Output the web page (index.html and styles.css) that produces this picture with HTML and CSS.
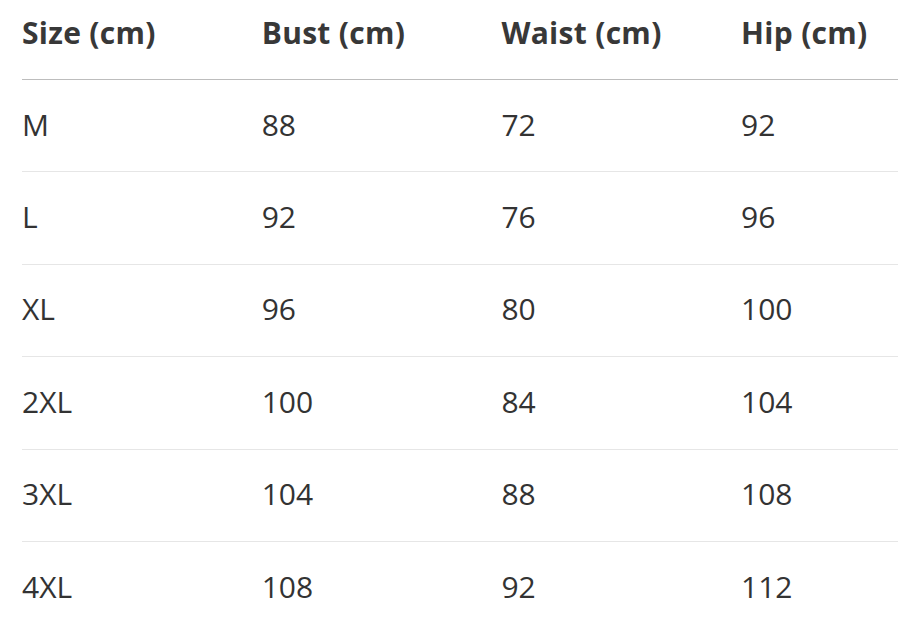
FILE: index.html
```html
<!DOCTYPE html>
<html>
<head>
<meta charset="utf-8">
<link rel="stylesheet" href="styles.css">
</head>
<body>
<div class="table">
  <div class="row head">
    <div class="cell">Size (cm)</div>
    <div class="cell">Bust (cm)</div>
    <div class="cell">Waist (cm)</div>
    <div class="cell">Hip (cm)</div>
  </div>
  <div class="row first">
    <div class="cell">M</div><div class="cell">88</div><div class="cell">72</div><div class="cell">92</div>
  </div>
  <div class="row">
    <div class="cell">L</div><div class="cell">92</div><div class="cell">76</div><div class="cell">96</div>
  </div>
  <div class="row">
    <div class="cell">XL</div><div class="cell">96</div><div class="cell">80</div><div class="cell">100</div>
  </div>
  <div class="row">
    <div class="cell">2XL</div><div class="cell">100</div><div class="cell">84</div><div class="cell">104</div>
  </div>
  <div class="row">
    <div class="cell">3XL</div><div class="cell">104</div><div class="cell">88</div><div class="cell">108</div>
  </div>
  <div class="row">
    <div class="cell">4XL</div><div class="cell">108</div><div class="cell">92</div><div class="cell">112</div>
  </div>
</div>
</body>
</html>
```

FILE: styles.css
```css
html, body {
  margin: 0;
  padding: 0;
  background: #ffffff;
  overflow: hidden;
}
body {
  font-family: "Open Sans", "Noto Sans", "Liberation Sans", sans-serif;
  color: #333333;
}
.table {
  margin-left: 22px;
  display: flex;
  flex-direction: column;
}
.row {
  display: grid;
  grid-template-columns: 239.7px 239.7px 239.7px 1fr;
  box-sizing: border-box;
  height: 92.4px;
  padding-bottom: 3px;
  border-top: 1px solid #e6e6e6;
  align-items: center;
  font-size: 30px;
}
.row.head {
  height: 79px;
  border-top: none;
  align-items: start;
  padding-top: 13px;
  padding-bottom: 0;
  font-size: 30px;
  font-weight: 700;
  letter-spacing: 0.3px;
  line-height: 40px;
  color: #383838;
}
.row.first {
  border-top-color: #bdbdbd;
}
.cell {
  white-space: nowrap;
}
```
